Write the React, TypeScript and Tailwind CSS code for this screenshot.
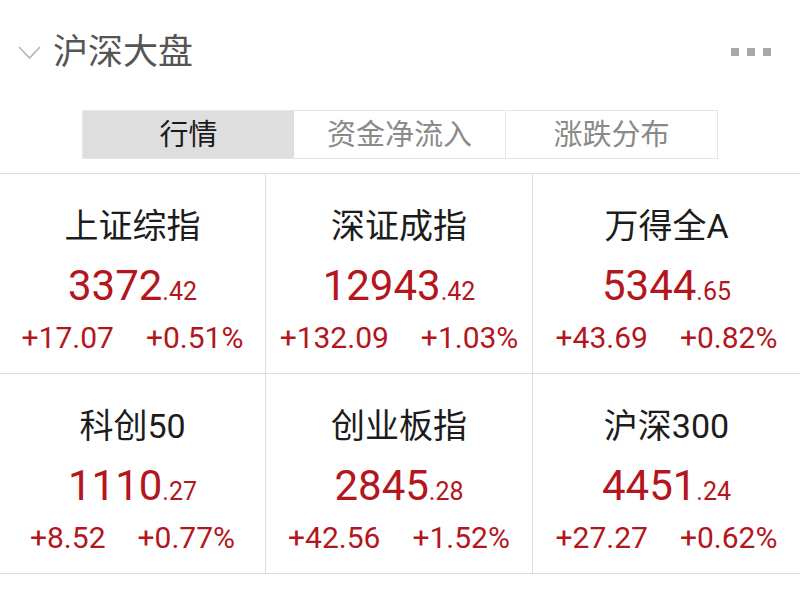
import React from "react";

const items = [
  { name: "上证综指", int: "3372", dec: ".42", chg: "+17.07", pct: "+0.51%" },
  { name: "深证成指", int: "12943", dec: ".42", chg: "+132.09", pct: "+1.03%" },
  { name: "万得全A", int: "5344", dec: ".65", chg: "+43.69", pct: "+0.82%" },
  { name: "科创50", int: "1110", dec: ".27", chg: "+8.52", pct: "+0.77%" },
  { name: "创业板指", int: "2845", dec: ".28", chg: "+42.56", pct: "+1.52%" },
  { name: "沪深300", int: "4451", dec: ".24", chg: "+27.27", pct: "+0.62%" },
];

export default function App() {
  return (
    <div
      className="w-[800px] h-[599px] bg-white overflow-hidden"
      style={{ fontFamily: 'Roboto, "Noto Sans CJK SC", sans-serif' }}
    >
      <div className="flex items-center h-[70px] mt-[17px] pl-[18px] pr-[29px]">
        <svg width="23" height="14" viewBox="0 0 23 14" className="mt-[2px]">
          <polyline points="1,1 11.5,12 22,1" fill="none" stroke="#b5b5b5" strokeWidth="1.6" />
        </svg>
        <div className="ml-[12px] text-[35px] leading-none text-[#555555]">沪深大盘</div>
        <div className="ml-auto flex gap-[8px]">
          <div className="w-[8px] h-[8px] bg-[#a8a8a8]" />
          <div className="w-[8px] h-[8px] bg-[#a8a8a8]" />
          <div className="w-[8px] h-[8px] bg-[#a8a8a8]" />
        </div>
      </div>
      <div className="mt-[23px] ml-[82px] w-[636px] h-[49px] flex border border-[#e6e6e6]">
        <div className="flex-1 flex items-center justify-center pt-[3px] bg-[#dedede] text-[29px] text-[#1a1a1a]">行情</div>
        <div className="flex-1 flex items-center justify-center pt-[3px] border-r border-[#e6e6e6] text-[29px] text-[#8a8a8a]">资金净流入</div>
        <div className="flex-1 flex items-center justify-center pt-[3px] text-[29px] text-[#8a8a8a]">涨跌分布</div>
      </div>
      <div className="mt-[14px] grid grid-cols-[266px_267px_267px] border-t border-[#dcdcdc]">
        {items.map((it, i) => (
          <div
            key={i}
            className={
              "h-[200px] flex flex-col items-center border-b border-[#dcdcdc] " +
              (i % 3 !== 2 ? "border-r" : "")
            }
          >
            <div className="mt-[32px] text-[34px] leading-[40px] text-[#1c1c1c]">{it.name}</div>
            <div className="mt-[17px] leading-[46px] text-[#b3161c]">
              <span className="text-[42px]">{it.int}</span>
              <span className="text-[25px]">{it.dec}</span>
            </div>
            <div className="mt-[2px] flex gap-[32px] text-[30px] leading-[36px] text-[#b3161c] whitespace-nowrap">
              <span>{it.chg}</span>
              <span>{it.pct}</span>
            </div>
          </div>
        ))}
      </div>
    </div>
  );
}
